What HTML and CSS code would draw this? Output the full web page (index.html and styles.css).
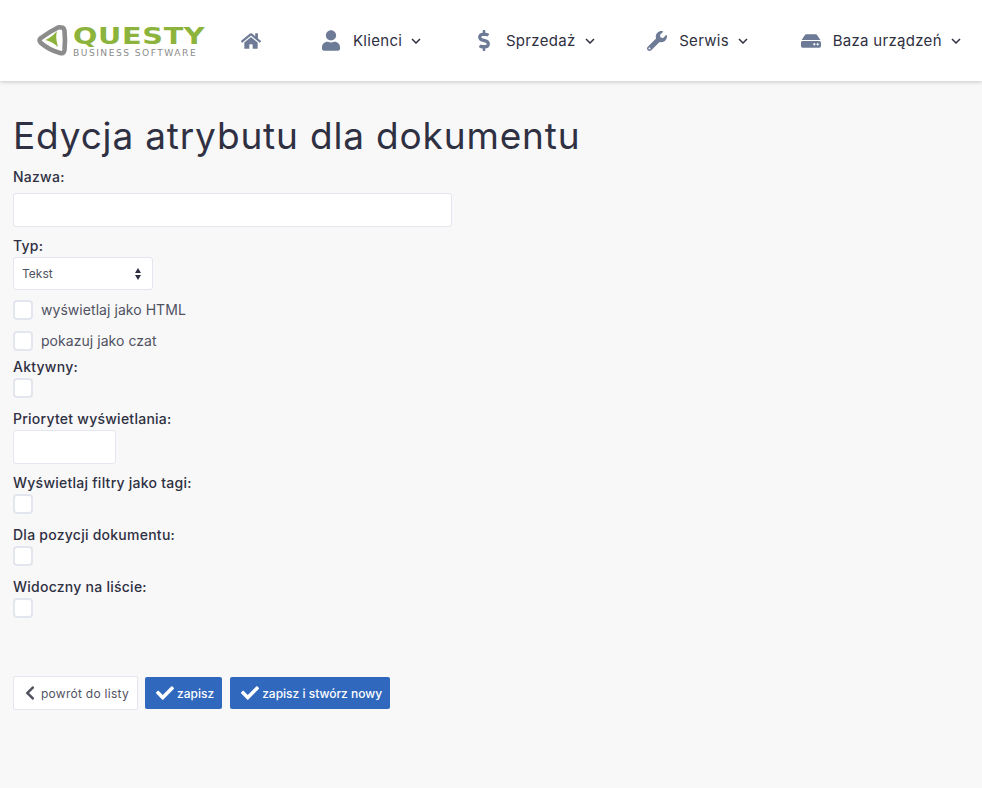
FILE: index.html
```html
<!DOCTYPE html>
<html>
  <head>
    <title>Edycja atrybutu dla dokumentu</title>
    <link rel="stylesheet" href="styles.css">
  </head>
  <body>
    <header class="topbar">
      <a class="logo">
        <svg class="logo-mark" viewBox="0 0 31 33">
          <path d="M24 3.5Q27 3 27.5 7Q28.5 16 27.5 26Q27 30 23 29Q12 26 4 19Q1 16 4 14Q12 8 21 3.5Q23 3 24 3.5Z" fill="none" stroke="#8c8c8c" stroke-width="4.6" stroke-linejoin="round"/>
          <path d="M8.5 16Q15 13 20 7Q18 13 21 23Q16 18 8.5 16Z" fill="#8cb33c"/>
        </svg>
        <div class="logo-text">
          <span class="logo-name">QUESTY</span>
          <span class="logo-sub">BUSINESS SOFTWARE</span>
        </div>
      </a>
      <nav class="nav">
        <a class="nav-item nav-home">
          <span class="nav-icon">
            <svg width="20" height="18" viewBox="0 0 576 512"><path d="M280.37 148.26L96 300.11V464a16 16 0 0 0 16 16l112.06-.29a16 16 0 0 0 15.92-16V368a16 16 0 0 1 16-16h64a16 16 0 0 1 16 16v95.64a16 16 0 0 0 16 16.05L464 480a16 16 0 0 0 16-16V300L295.67 148.26a12.19 12.19 0 0 0-15.3 0zM571.6 251.47L488 182.56V44.05a12 12 0 0 0-12-12h-56a12 12 0 0 0-12 12v72.61L318.47 43a48 48 0 0 0-61 0L4.34 251.47a12 12 0 0 0-1.6 16.9l25.5 31A12 12 0 0 0 45.15 301l235.22-193.74a12.19 12.19 0 0 1 15.3 0L530.9 301a12 12 0 0 0 16.9-1.6l25.5-31a12 12 0 0 0-1.7-16.93z"/></svg>
          </span>
        </a>
        <a class="nav-item">
          <span class="nav-icon">
            <svg width="18" height="21" viewBox="0 0 448 512"><path d="M224 256c70.7 0 128-57.3 128-128S294.7 0 224 0 96 57.3 96 128s57.3 128 128 128zm89.6 32h-16.7c-22.2 10.2-46.9 16-72.9 16s-50.6-5.8-72.9-16h-16.7C60.2 288 0 348.2 0 422.4V464c0 26.5 21.5 48 48 48h352c26.5 0 48-21.5 48-48v-41.6c0-74.2-60.2-134.4-134.4-134.4z"/></svg>
          </span>
          <span class="nav-label">Klienci</span>
          <svg class="caret" viewBox="0 0 10 6"><path d="M1 1l4 4 4-4"/></svg>
        </a>
        <a class="nav-item">
          <span class="nav-icon">
            <svg width="12" height="21" viewBox="0 0 288 512"><path d="M209.2 233.4l-108-31.6C88.7 198.2 80 186.5 80 173.5c0-16.3 13.2-29.5 29.5-29.5h66.3c12.2 0 24.2 3.7 34.2 10.5 6.1 4.1 14.3 3.1 19.5-2l34.8-34c7.1-6.9 6.1-18.4-1.8-24.5C238 74.8 207.4 64.1 176 64V16c0-8.8-7.2-16-16-16h-32c-8.8 0-16 7.2-16 16v48h-2.5C45.8 64-5.4 118.7.5 183.6c4.2 46.1 39.4 83.6 83.8 96.6l102.5 30c12.5 3.7 21.2 15.3 21.2 28.3 0 16.3-13.2 29.5-29.5 29.5h-66.3C100 368 88 364.3 78 357.5c-6.1-4.1-14.3-3.1-19.5 2l-34.8 34c-7.1 6.9-6.1 18.4 1.8 24.5 24.5 19.2 55.1 29.9 86.5 30v48c0 8.8 7.2 16 16 16h32c8.8 0 16-7.2 16-16v-48.2c46.6-.9 90.3-28.6 105.7-72.7 21.5-61.6-14.6-124.8-72.5-141.7z"/></svg>
          </span>
          <span class="nav-label">Sprzedaż</span>
          <svg class="caret" viewBox="0 0 10 6"><path d="M1 1l4 4 4-4"/></svg>
        </a>
        <a class="nav-item">
          <span class="nav-icon">
            <svg width="20" height="20" viewBox="0 0 512 512"><path d="M507.73 109.1c-2.24-9.03-13.54-12.09-20.12-5.51l-74.36 74.36-67.88-11.31-11.31-67.88 74.36-74.36c6.62-6.62 3.43-17.9-5.66-20.16-47.38-11.74-99.55.91-136.58 37.93-39.64 39.64-50.55 97.1-34.05 147.2L18.74 402.76c-24.99 24.99-24.99 65.51 0 90.5 24.99 24.99 65.51 24.99 90.5 0l213.21-213.21c50.12 16.71 107.47 5.68 147.37-34.22 37.07-37.07 49.7-89.32 37.91-136.73zM64 472c-13.25 0-24-10.75-24-24 0-13.26 10.75-24 24-24s24 10.74 24 24c0 13.25-10.75 24-24 24z"/></svg>
          </span>
          <span class="nav-label">Serwis</span>
          <svg class="caret" viewBox="0 0 10 6"><path d="M1 1l4 4 4-4"/></svg>
        </a>
        <a class="nav-item">
          <span class="nav-icon">
            <svg width="20" height="18" viewBox="0 0 576 512"><path d="M576 304v96c0 26.51-21.49 48-48 48H48c-26.51 0-48-21.49-48-48v-96c0-26.51 21.49-48 48-48h480c26.51 0 48 21.49 48 48zm-48-80a79.557 79.557 0 0 1 30.777 6.165L462.25 85.374A48.003 48.003 0 0 0 422.311 64H153.689a48 48 0 0 0-39.938 21.374L17.223 230.165A79.557 79.557 0 0 1 48 224h480zm-48 96c-17.673 0-32 14.327-32 32s14.327 32 32 32 32-14.327 32-32-14.327-32-32-32zm-96 0c-17.673 0-32 14.327-32 32s14.327 32 32 32 32-14.327 32-32-14.327-32-32-32z"/></svg>
          </span>
          <span class="nav-label">Baza urządzeń</span>
          <svg class="caret" viewBox="0 0 10 6"><path d="M1 1l4 4 4-4"/></svg>
        </a>
      </nav>
    </header>

    <main class="content">
      <h1 class="page-title">Edycja atrybutu dla dokumentu</h1>
      <form>
        <div class="field field-name">
          <label class="field-label">Nazwa:</label>
          <input class="input input-name" type="text">
        </div>
        <div class="field field-type">
          <label class="field-label">Typ:</label>
          <div class="select">
            <span>Tekst</span>
            <svg class="select-arrows" width="6" height="14" viewBox="0 0 6 14"><path d="M3 1L6 6H0zM3 13L0 8h6z"/></svg>
          </div>
        </div>
        <div class="check-group">
          <div class="check-row">
            <span class="checkbox"></span>
            <span class="check-label">wyświetlaj jako HTML</span>
          </div>
          <div class="check-row">
            <span class="checkbox"></span>
            <span class="check-label">pokazuj jako czat</span>
          </div>
        </div>
        <div class="field field-check">
          <label class="field-label">Aktywny:</label>
          <span class="checkbox"></span>
        </div>
        <div class="field">
          <label class="field-label">Priorytet wyświetlania:</label>
          <input class="input input-priority" type="text">
        </div>
        <div class="field field-check">
          <label class="field-label">Wyświetlaj filtry jako tagi:</label>
          <span class="checkbox"></span>
        </div>
        <div class="field field-check">
          <label class="field-label">Dla pozycji dokumentu:</label>
          <span class="checkbox"></span>
        </div>
        <div class="field field-check">
          <label class="field-label">Widoczny na liście:</label>
          <span class="checkbox"></span>
        </div>
        <div class="actions">
          <a class="btn btn-back">
            <svg width="10" height="16" viewBox="0 0 320 512"><path d="M34.52 239.03L228.87 44.69c9.37-9.37 24.57-9.37 33.94 0l22.67 22.67c9.36 9.36 9.37 24.52.04 33.9L131.49 256l154.02 154.75c9.34 9.38 9.32 24.54-.04 33.9l-22.67 22.67c-9.37 9.37-24.57 9.37-33.94 0L34.52 272.97c-9.37-9.37-9.37-24.57 0-33.94z"/></svg>
            powrót do listy
          </a>
          <a class="btn btn-primary">
            <svg width="18" height="18" viewBox="0 0 512 512"><path d="M173.898 439.404l-166.4-166.4c-9.997-9.997-9.997-26.206 0-36.204l36.203-36.204c9.997-9.998 26.207-9.998 36.204 0L192 312.69 432.095 72.596c9.997-9.997 26.207-9.997 36.204 0l36.203 36.204c9.997 9.997 9.997 26.206 0 36.204l-294.4 294.401c-9.998 9.997-26.207 9.997-36.204-.001z"/></svg>
            zapisz
          </a>
          <a class="btn btn-primary">
            <svg width="18" height="18" viewBox="0 0 512 512"><path d="M173.898 439.404l-166.4-166.4c-9.997-9.997-9.997-26.206 0-36.204l36.203-36.204c9.997-9.998 26.207-9.997 36.204 0L192 312.69 432.095 72.596c9.997-9.997 26.207-9.997 36.204 0l36.203 36.204c9.997 9.997 9.997 26.206 0 36.204l-294.4 294.401c-9.998 9.997-26.207 9.997-36.204-.001z"/></svg>
            zapisz i stwórz nowy
          </a>
        </div>
      </form>
    </main>
  </body>
</html>
```

FILE: styles.css
```css
body {
  margin: 0;
  background-color: #f8f8f9;
  color: #2f3042;
  font-family: Inter, "Open Sans", sans-serif;
  font-size: 14px;
}
.topbar {
  display: flex;
  align-items: center;
  height: 81px;
  padding-left: 37px;
  background-color: #fff;
  box-shadow: 0 1px 4px rgba(0, 0, 0, 0.2);
}
.logo {
  display: flex;
  align-items: center;
  width: 201.5px;
}
.logo-mark {
  flex: none;
  width: 31px;
  height: 33px;
}
.logo-text {
  display: flex;
  flex-direction: column;
  margin-left: 5px;
  margin-top: 1px;
  font-family: "DejaVu Sans", sans-serif;
  white-space: nowrap;
}
.logo-name {
  color: #8cb33c;
  font-size: 23px;
  line-height: 22px;
  font-weight: 700;
  letter-spacing: 0.5px;
  transform: scaleX(1.25);
  transform-origin: left center;
}
.logo-sub {
  margin-top: 2px;
  color: #8c8c8c;
  font-size: 8px;
  line-height: 9px;
  letter-spacing: 1.3px;
  transform: scaleX(1.14);
  transform-origin: left center;
}
.nav {
  display: flex;
  align-items: center;
  gap: 50.2px;
}
.nav-home {
  margin-right: 4.8px;
}
.nav-item {
  display: flex;
  align-items: center;
  font-size: 15px;
  font-weight: 400;
  letter-spacing: 0.3px;
}
.nav-icon {
  display: flex;
  justify-content: center;
  width: 25px;
  margin-right: 9.5px;
}
.nav-home .nav-icon {
  margin-right: 0;
}
.nav-icon svg {
  fill: #6e7b96;
}
.caret {
  width: 10px;
  height: 6px;
  margin-left: 9px;
  fill: none;
  stroke: #2f3042;
  stroke-width: 1.5;
}
.content {
  padding: 0 13px;
}
.page-title {
  margin: 28px 0 4px;
  font-size: 37px;
  line-height: 54px;
  font-weight: 400;
  letter-spacing: 0.83px;
}
.field {
  margin-bottom: 9px;
}
.field-type {
  margin-bottom: 10px;
}
.field-check {
  margin-bottom: 11px;
}
.field-label {
  display: block;
  height: 21px;
  line-height: 19px;
  font-weight: 500;
  letter-spacing: 0.25px;
}
.field-name .field-label {
  margin-bottom: 5px;
}
.input {
  display: block;
  box-sizing: border-box;
  height: 34px;
  background-color: #fff;
  border: 1px solid #e4e6ef;
  border-radius: 3px;
  outline: none;
}
.input-name {
  width: 439px;
}
.input-priority {
  width: 103px;
}
.select {
  display: flex;
  align-items: center;
  justify-content: space-between;
  box-sizing: border-box;
  width: 140px;
  height: 33px;
  padding: 0 11px 0 8px;
  background-color: #fff;
  border: 1px solid #e4e6ef;
  border-radius: 3px;
  color: #50525f;
  font-size: 12px;
}
.select-arrows {
  fill: #2f3042;
}
.check-group {
  display: flex;
  flex-direction: column;
  gap: 11px;
  margin-bottom: 6px;
}
.check-row {
  display: flex;
  align-items: center;
  height: 20px;
  color: #50525f;
  letter-spacing: 0.05px;
}
.checkbox {
  display: block;
  box-sizing: border-box;
  width: 20px;
  height: 20px;
  background-color: #fff;
  border: 2px solid #e4e6ef;
  border-radius: 4px;
}
.check-label {
  margin-left: 8px;
  padding-bottom: 2px;
}
.actions {
  display: flex;
  align-items: center;
  margin-top: 58px;
}
.btn {
  display: flex;
  align-items: center;
  gap: 3px;
  box-sizing: border-box;
  height: 32px;
  margin-right: 8px;
  padding: 0 8px 0 11px;
  border-radius: 2px;
  font-size: 12px;
  font-weight: 500;
}
.btn-back {
  gap: 6px;
  height: 34px;
  margin-right: 7px;
  background-color: #fff;
  border: 1px solid #e4e6ef;
  color: #50525f;
  font-weight: 400;
  letter-spacing: 0.27px;
}
.btn-back svg {
  fill: #50525f;
}
.btn-primary {
  background-color: #3068be;
  color: #fff;
}
.btn-primary svg {
  fill: #fff;
}
```
